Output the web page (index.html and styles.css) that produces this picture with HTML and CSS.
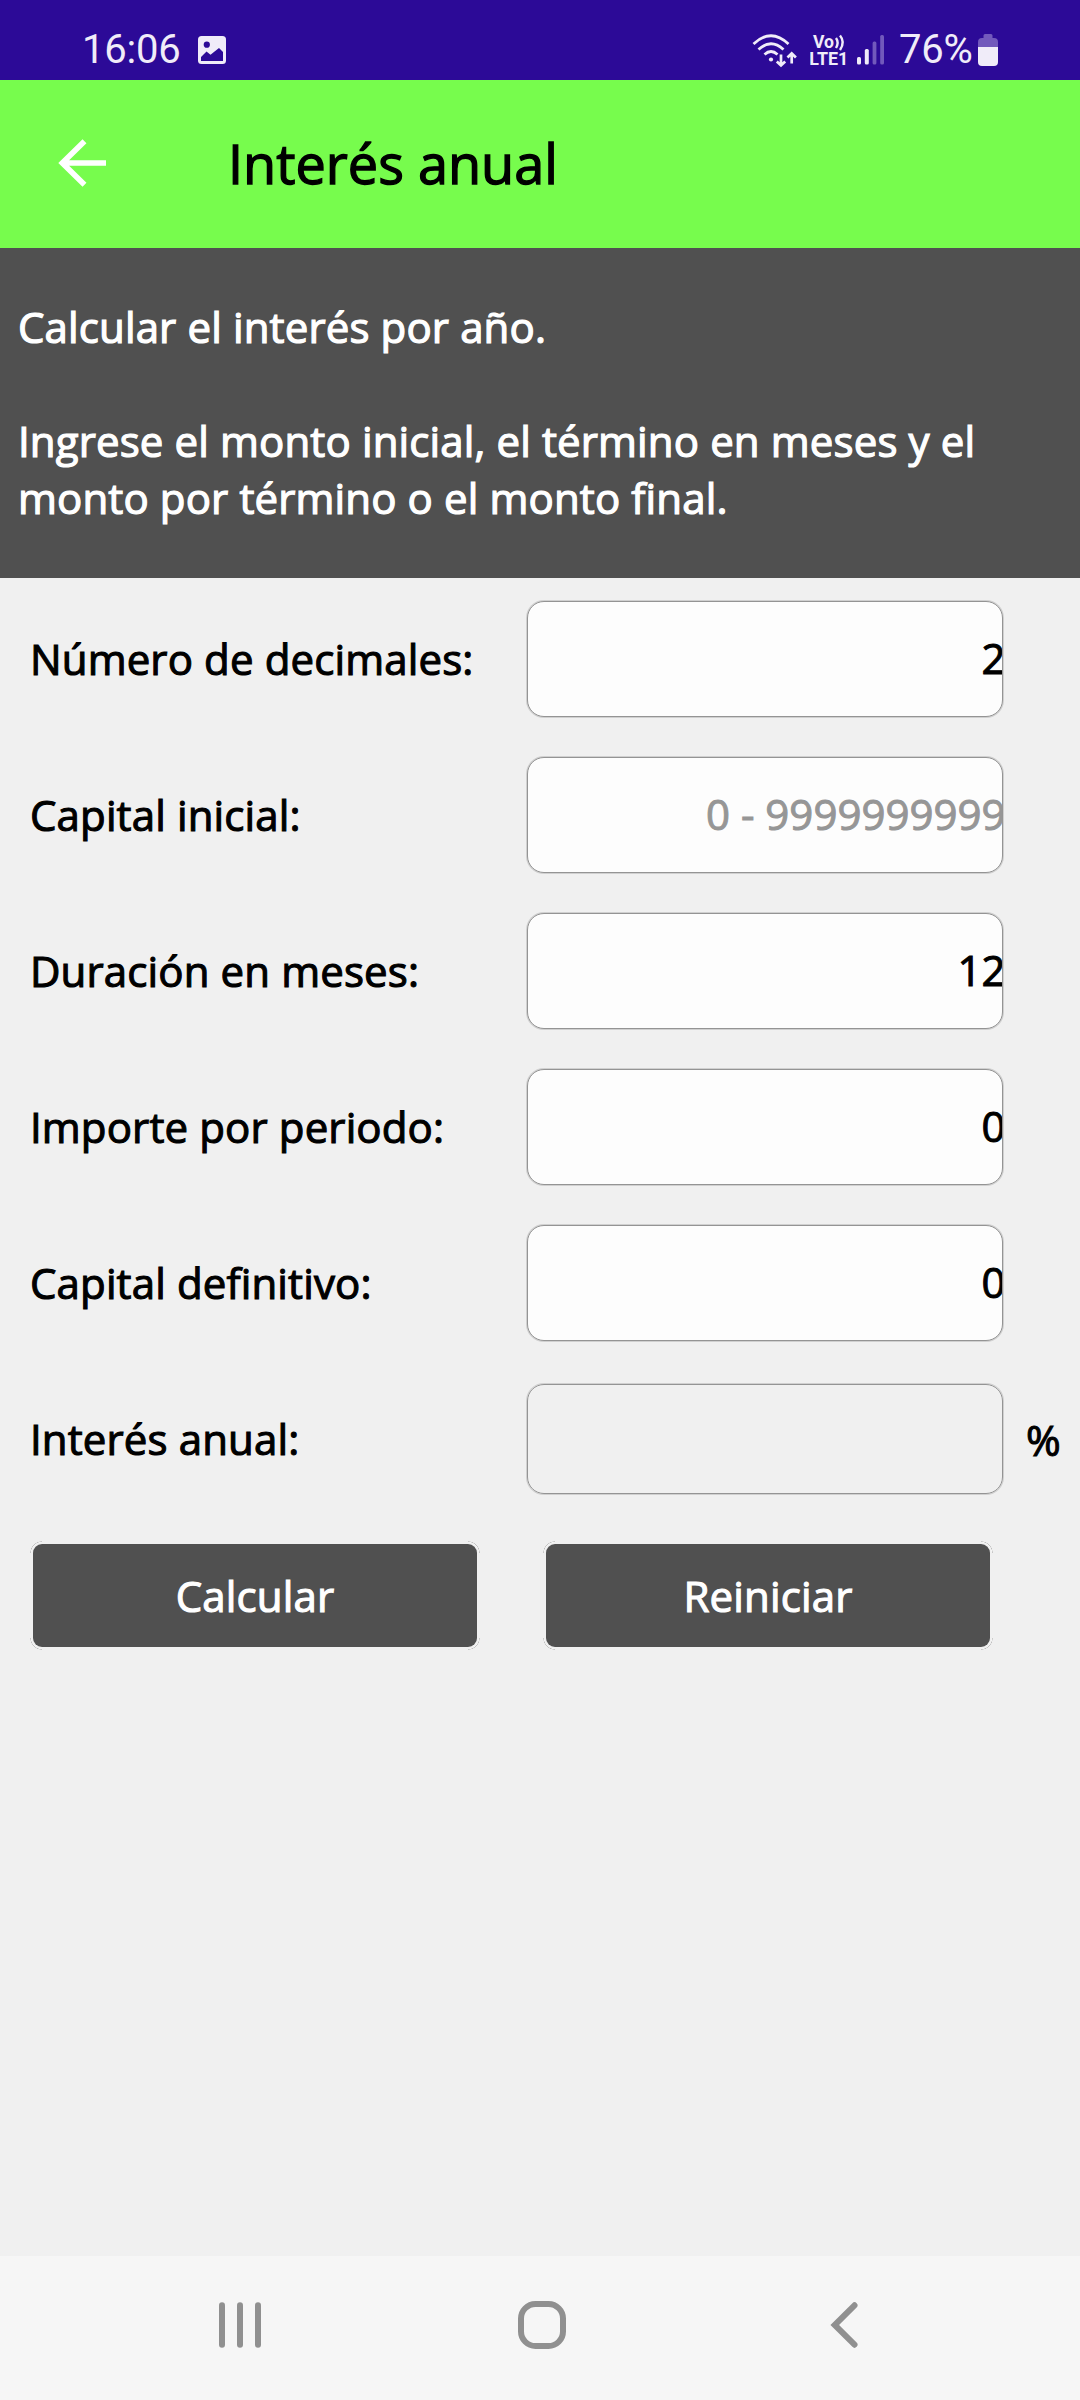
FILE: index.html
```html
<!DOCTYPE html>
<html lang="es">
<head>
<meta charset="utf-8">
<title>Interés anual</title>
<link rel="stylesheet" href="styles.css">
</head>
<body>
<div class="screen">
  <div class="status">
    <span class="status-text">16:06</span>
    <svg class="icon-image" width="28" height="28" viewBox="0 0 28 28">
      <rect width="28" height="28" rx="3.5" fill="#f0ecf9"/>
      <circle cx="8.8" cy="8.7" r="3.1" fill="#2c0a97"/>
      <path d="M3 25V21L8.5 15.5L12.5 18.8L21 12L25 16V25Z" fill="#2c0a97"/>
    </svg>
    <svg class="icon-wifi" width="46" height="36" viewBox="752 31 46 36" fill="none" stroke="#f0ecf9" stroke-width="2.8">
      <path d="M753.5 43Q771 26.500 788.500 43M758.500 48.500Q771 37 783.500 48.500M764.500 53.500Q771 47.500 777.500 53.500"/>
      <circle cx="771" cy="58.500" r="2.100" fill="#f0ecf9" stroke="none"/>
      <path d="M781 53.500V64M776.800 60.500L781 64.500L785.200 60.500M791.700 62.500V53M787.500 56.500L791.700 52.300L795.900 56.500" stroke-width="2.700"/>
    </svg>
    <svg class="icon-volte" width="40" height="36" viewBox="810 32 40 36">
      <g class="volte-text">
        <text x="813" y="47.700" textLength="21" lengthAdjust="spacingAndGlyphs">Vo</text>
        <text x="809.300" y="65" textLength="39" lengthAdjust="spacingAndGlyphs">LTE1</text>
      </g>
      <path d="M836 38Q839.200 42.500 836 48M840 35.500Q845.500 42 840 50" fill="none" stroke="#f0ecf9" stroke-width="2.400"/>
    </svg>
    <svg class="icon-signal" width="28" height="30" viewBox="857 35 28 30" fill="#f0ecf9">
      <rect x="857" y="57" width="4" height="7.500" rx="1.500"/>
      <rect x="864.800" y="49" width="4" height="15.500" rx="1.500"/>
      <rect x="872.600" y="41.500" width="3.800" height="23" rx="1.500" fill="#7259bc"/>
      <rect x="880.200" y="35" width="3.800" height="29.500" rx="1.500" fill="#7259bc"/>
    </svg>
    <span class="status-text percent">76%</span>
    <svg class="icon-battery" width="20" height="32" viewBox="0 0 20 32">
      <path d="M5.500 4V1.500Q5.500 0 7 0H13Q14.500 0 14.500 1.500V4H16Q20 4 20 8V13H0V8Q0 4 4 4Z" fill="#7259bc"/>
      <path d="M0 13H20V28Q20 32 16 32H4Q0 32 0 28Z" fill="#f0ecf9"/>
    </svg>
  </div>

  <header class="appbar">
    <svg class="icon-back" width="50" height="50" viewBox="57 138 50 50" fill="none" stroke="#fff" stroke-width="5.600">
      <path d="M106 163H62M84.500 141.300L62.300 163L84.500 184.700"/>
    </svg>
    <h1 class="title">Interés anual</h1>
  </header>

  <section class="intro">
    <p>Calcular el interés por año.</p>
    <p>Ingrese el monto inicial, el término en meses y el<br>monto por término o el monto final.</p>
  </section>

  <main class="form">
    <div class="row"><span class="label">Número de decimales:</span><div class="field"><span class="value">2</span></div></div>
    <div class="row"><span class="label">Capital inicial:</span><div class="field"><span class="value hint">0 - 9999999999</span></div></div>
    <div class="row"><span class="label">Duración en meses:</span><div class="field"><span class="value">12</span></div></div>
    <div class="row"><span class="label">Importe por periodo:</span><div class="field"><span class="value">0</span></div></div>
    <div class="row"><span class="label">Capital definitivo:</span><div class="field"><span class="value">0</span></div></div>
    <div class="row"><span class="label">Interés anual:</span><div class="field result"></div><span class="unit">%</span></div>
    <div class="actions">
      <div class="button">Calcular</div>
      <div class="button">Reiniciar</div>
    </div>
  </main>

  <nav class="navbar">
    <svg width="48" height="48" viewBox="0 0 48 48" fill="#909090">
      <rect x="3" y="1.300" width="6" height="45.400" rx="3"/>
      <rect x="21" y="1.300" width="6" height="45.400" rx="3"/>
      <rect x="39" y="1.300" width="6" height="45.400" rx="3"/>
    </svg>
    <svg width="48" height="48" viewBox="0 0 48 48" fill="none" stroke="#909090" stroke-width="6">
      <rect x="3" y="3" width="42" height="42" rx="14.500"/>
    </svg>
    <svg width="48" height="48" viewBox="820 2301 48 48" fill="none" stroke="#909090" stroke-width="6" stroke-linecap="round">
      <path d="M854.500 2305.300L834.700 2325L854.500 2344.700"/>
    </svg>
  </nav>
</div>
</body>
</html>
```
FILE: styles.css
```css
* {
  box-sizing: border-box;
}

body {
  margin: 0;
  background: #f0f0f0;
  font-family: "Open Sans", "Noto Sans", sans-serif;
  font-size: 42px;
  line-height: 57px;
  color: #000;
}

p, h1 {
  margin: 0;
}

svg {
  display: block;
  flex: none;
}

.screen {
  display: flex;
  flex-direction: column;
  width: 1080px;
  height: 2400px;
  overflow: hidden;
}

/* status bar */
.status {
  display: flex;
  align-items: center;
  height: 80px;
  padding: 20px 82px 0 82px;
  background: #2c0a97;
  color: #f0ecf9;
}

.status-text {
  width: 101px;
  font: 400 40px/58px Roboto, sans-serif;
  letter-spacing: -0.2px;
  white-space: nowrap;
}

.icon-image {
  margin-left: 15px;
}

.icon-wifi {
  margin-left: auto;
}

.icon-volte {
  margin-left: 12px;
}

.volte-text {
  font: 700 17.5px Roboto, sans-serif;
  fill: #f0ecf9;
}

.icon-signal {
  margin-left: 7px;
}

.percent {
  width: 75px;
  margin-left: 14px;
}

.icon-battery {
  margin-left: 4px;
}

/* app bar */
.appbar {
  display: flex;
  align-items: center;
  height: 168px;
  padding: 0 57px;
  background: #77fc4d;
}

.icon-back {
  margin-top: -2px;
}

.title {
  margin-left: 121px;
  padding-bottom: 2px;
  font-size: 54px;
  font-weight: 400;
  line-height: 75px;
  -webkit-text-stroke: 1.3px currentColor;
}

/* description */
.intro {
  display: flex;
  flex-direction: column;
  gap: 57px;
  height: 330px;
  padding: 50px 18px 0;
  background: #505050;
  color: #fff;
  letter-spacing: 0.13px;
  white-space: nowrap;
  -webkit-text-stroke: 1.2px currentColor;
}

/* form */
.form {
  flex: 1;
  padding-top: 3px;
}

.row {
  display: flex;
  align-items: center;
  height: 156px;
  padding-left: 30px;
}

.label {
  width: 497px;
  padding-bottom: 2px;
  letter-spacing: 0.13px;
  white-space: nowrap;
  -webkit-text-stroke: 1.1px currentColor;
}

.field {
  display: flex;
  align-items: center;
  justify-content: flex-end;
  width: 476px;
  height: 116px;
  border: 1px solid #949494;
  border-radius: 17px;
  background: #fdfdfd;
  box-shadow: 0 0 0 1px rgba(148, 148, 148, 0.35);
  overflow: hidden;
}

.result {
  height: 110px;
  background: none;
}

.value {
  margin-right: -3.5px;
  padding-bottom: 4px;
  white-space: nowrap;
  -webkit-text-stroke: 1px currentColor;
}

.hint {
  color: #969696;
}

.unit {
  margin-left: 23px;
  -webkit-text-stroke: 1px currentColor;
}

.actions {
  display: flex;
  gap: 63px;
  padding: 24px 0 0 30px;
}

/* the button face sits inside a hairline that shows at the corners only */
.button {
  --arc: transparent 10.4px, #f6f6f6 10.8px, #bdbdbd 11.4px, transparent 12px;
  width: 450px;
  height: 109px;
  border: 3px solid transparent;
  border-radius: 12px;
  background:
    linear-gradient(#505050, #505050) padding-box,
    radial-gradient(circle at 100% 100%, var(--arc)) 0 0 / 12px 12px no-repeat border-box,
    radial-gradient(circle at 0 100%, var(--arc)) 100% 0 / 12px 12px no-repeat border-box,
    radial-gradient(circle at 100% 0, var(--arc)) 0 100% / 12px 12px no-repeat border-box,
    radial-gradient(circle at 0 0, var(--arc)) 100% 100% / 12px 12px no-repeat border-box;
  color: #fff;
  line-height: 103px;
  letter-spacing: 0.13px;
  text-align: center;
  -webkit-text-stroke: 1.1px currentColor;
}

/* navigation bar */
.navbar {
  display: flex;
  justify-content: space-between;
  flex: 0 0 144px;
  padding: 45px 212px 0 216px;
  background: #f6f6f6;
}
```
